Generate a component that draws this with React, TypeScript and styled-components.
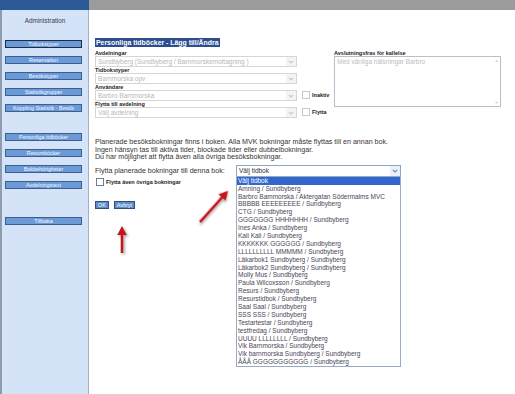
import styled, { createGlobalStyle } from "styled-components";

const GlobalStyle = createGlobalStyle`
  html, body {
    margin: 0;
    padding: 0;
    background: #fff;
    overflow: hidden;
  }
  body {
    font-family: "Liberation Sans", Arial, sans-serif;
  }
`;

const navItems = [
	{ label: "Tidbokstyper", active: true, gap: 0 },
	{ label: "Reservation", gap: 0 },
	{ label: "Besökstyper", gap: 0 },
	{ label: "Statistikgrupper", gap: 0 },
	{ label: "Koppling Statistik - Besök", gap: 0 },
	{ label: "Personliga tidböcker", gap: 13 },
	{ label: "Resursböcker", gap: 0 },
	{ label: "Bokbehörigheter", gap: 0 },
	{ label: "Avdelningstext", gap: 0 },
	{ label: "Tillbaka", gap: 20 },
];

const books = [
	"Välj tidbok",
	"Amning / Sundbyberg",
	"Barbro Bammorska / Aktergatan Södermalms MVC",
	"BBBBB EEEEEEEEE / Sundbyberg",
	"CTG / Sundbyberg",
	"GGGGGGG HHHHHHH / Sundbyberg",
	"Ines Anka / Sundbyberg",
	"Kali Kali / Sundbyberg",
	"KKKKKKK GGGGGG / Sundbyberg",
	"LLLLLLLLLL MMMMM / Sundbyberg",
	"Läkarbok1 Sundbyberg / Sundbyberg",
	"Läkarbok2 Sundbyberg / Sundbyberg",
	"Molly Mus / Sundbyberg",
	"Paula Wilcoxsson / Sundbyberg",
	"Resurs / Sundbyberg",
	"Resurstidbok / Sundbyberg",
	"Saal Saal / Sundbyberg",
	"SSS SSS / Sundbyberg",
	"Testartestar / Sundbyberg",
	"testfredag / Sundbyberg",
	"UUUU LLLLLLLL / Sundbyberg",
	"Vik Barnmorska / Sundbyberg",
	"Vik barnmorska Sundbyberg / Sundbyberg",
	"ÅÅÅ GGGGGGGGGGG / Sundbyberg",
];

const fields = [
	{ label: "Avdelningar", value: "Sundbyberg (Sundbyberg / Barnmorskemottagning )" },
	{ label: "Tidbokstyper", value: "Barnmorska opv" },
	{ label: "Användare", value: "Barbro Barnmorska" },
	{ label: "Flytta till avdelning", value: "Välj avdelning" },
];

const Chevron = ({ color }: { color: string }) => (
	<svg width="6" height="4" viewBox="0 0 6 4">
		<path d="M0.8 0.8 L3 3 L5.2 0.8" fill="none" stroke={color} strokeWidth="1.1" />
	</svg>
);

const Arrow = ({ x, y, length, angle }: { x: number; y: number; length: number; angle: number }) => (
	<g transform={`translate(${x} ${y}) rotate(${angle})`} filter="url(#shadow)">
		<rect x={-1.3} y={-length + 8} width={2.6} height={length - 8} fill="#c2151c" />
		<path d={`M0 ${-length} L-4.8 ${-length + 9} L4.8 ${-length + 9} Z`} fill="#c2151c" />
	</g>
);

export default function App() {
	return (
		<>
			<GlobalStyle />
			<Page>
				<Sidebar>
					<SidebarTop />
					<SidebarBody>
						<SidebarTitle>Administration</SidebarTitle>
						<Nav>
							{navItems.map((item) => (
								<NavButton key={item.label} $active={item.active} $gap={item.gap}>
									{item.label}
								</NavButton>
							))}
						</Nav>
					</SidebarBody>
				</Sidebar>
				<Main>
					<TopBar />
					<Content>
						<Heading>Personliga tidböcker - Lägg till/Ändra</Heading>
						<FormGrid>
							{fields.map((f, i) => (
								<Field key={f.label} style={{ gridRow: i + 1 }}>
									<Label>{f.label}</Label>
									<FakeSelect $disabled>
										<SelectText>{f.value}</SelectText>
										<SelectButton $disabled>
											<Chevron color="#c8c8c8" />
										</SelectButton>
									</FakeSelect>
								</Field>
							))}
							<CheckCell $row={3}>
								<Box $disabled />
								<CheckLabel>Inaktiv</CheckLabel>
							</CheckCell>
							<CheckCell $row={4}>
								<Box $disabled />
								<CheckLabel>Flytta</CheckLabel>
							</CheckCell>
							<NoteBlock>
								<Label>Avslutningsfras för kallelse</Label>
								<NoteBox>
									<NoteText>Med vänliga hälsningar Barbro</NoteText>
									<ScrollTrack>
										<ScrollArrow>▲</ScrollArrow>
										<ScrollArrow>▼</ScrollArrow>
									</ScrollTrack>
								</NoteBox>
							</NoteBlock>
						</FormGrid>
						<Info>
							Planerade besöksbokningar finns i boken. Alla MVK bokningar måste flyttas till en annan bok.
							<br />
							Ingen hänsyn tas till aktiva tider, blockade tider eller dubbelbokningar.
							<br />
							Du har möjlighet att flytta även alla övriga besöksbokningar.
						</Info>
						<MoveRow>
							<MoveLabel>Flytta planerade bokningar till denna bok:</MoveLabel>
							<BookSelect>
								<SelectText $dark>Välj tidbok</SelectText>
								<SelectButton>
									<Chevron color="#6f8fbf" />
								</SelectButton>
								<BookList>
									{books.map((b, i) => (
										<BookItem key={b} $selected={i === 0}>
											{b}
										</BookItem>
									))}
								</BookList>
							</BookSelect>
						</MoveRow>
						<CheckRow>
							<Box />
							<CheckLabel>Flytta även övriga bokningar</CheckLabel>
						</CheckRow>
						<Buttons>
							<ActionButton>OK</ActionButton>
							<ActionButton>Avbryt</ActionButton>
						</Buttons>
						<Annotations width="426" height="384">
							<defs>
								<filter id="shadow" x="-50%" y="-50%" width="200%" height="200%">
									<feDropShadow dx="1.5" dy="1.5" stdDeviation="1" floodColor="#000" floodOpacity="0.35" />
								</filter>
							</defs>
							<Arrow x={111} y={212} length={42} angle={42} />
							<Arrow x={33} y={243} length={27} angle={0} />
						</Annotations>
					</Content>
				</Main>
			</Page>
		</>
	);
}

const Page = styled.div`
  display: flex;
  width: 515px;
  height: 394px;
  overflow: hidden;
`;

const Sidebar = styled.aside`
  width: 89px;
  flex: none;
  display: flex;
  flex-direction: column;
`;

const SidebarTop = styled.div`
  height: 10px;
  background: #2b5995;
`;

const SidebarBody = styled.div`
  flex: 1;
  background: #d5e3f8;
  border-left: 2px solid #8f9cae;
  border-right: 1px solid #a3b0c4;
  box-sizing: border-box;
`;

const SidebarTitle = styled.div`
  margin-top: 7px;
  height: 8px;
  line-height: 8px;
  text-align: center;
  font-size: 6.4px;
  color: #3a3a4a;
`;

const Nav = styled.nav`
  display: flex;
  flex-direction: column;
  gap: 8px;
  margin-top: 15px;
  padding-left: 3px;
`;

const NavButton = styled.div<{ $active?: boolean; $gap: number }>`
  width: 77px;
  height: 8px;
  box-sizing: border-box;
  margin-top: ${(p) => p.$gap}px;
  background: #6c9ad6;
  border: 1px solid ${(p) => (p.$active ? "#1d2d48" : "#3a5f93")};
  color: #f4f8ff;
  font-size: 5.4px;
  line-height: 6px;
  text-align: center;
  white-space: nowrap;
  overflow: hidden;
`;

const Main = styled.main`
  flex: 1;
  display: flex;
  flex-direction: column;
`;

const TopBar = styled.div`
  height: 10px;
  background: #9b9b9b;
`;

const Content = styled.div`
  position: relative;
  flex: 1;
  display: flex;
  flex-direction: column;
  align-items: flex-start;
  padding: 28px 0 0 6px;
`;

const Heading = styled.div`
  height: 9px;
  line-height: 9px;
  padding: 0 1px;
  background: #2c4e8e;
  color: #fff;
  font-weight: bold;
  font-size: 6.9px;
  white-space: nowrap;
`;

const FormGrid = styled.div`
  display: grid;
  grid-template-columns: 207px 32px 167px;
  grid-template-rows: repeat(4, 17px);
  margin-top: 3px;
`;

const Field = styled.div`
  grid-column: 1;
  display: flex;
  flex-direction: column;
  width: 202px;
`;

const Label = styled.div`
  height: 6px;
  line-height: 6px;
  font-size: 5.5px;
  font-weight: bold;
  color: #222;
  white-space: nowrap;
`;

const FakeSelect = styled.div<{ $disabled?: boolean }>`
  display: flex;
  align-items: center;
  height: 11px;
  box-sizing: border-box;
  border: 1px solid ${(p) => (p.$disabled ? "#d6d6d6" : "#8ea6c6")};
  background: #fff;
`;

const SelectText = styled.span<{ $dark?: boolean }>`
  flex: 1;
  padding-left: 2px;
  font-size: 6.5px;
  line-height: 9px;
  color: ${(p) => (p.$dark ? "#333" : "#b8b8b8")};
  white-space: nowrap;
  overflow: hidden;
`;

const SelectButton = styled.span<{ $disabled?: boolean }>`
  display: flex;
  align-items: center;
  justify-content: center;
  width: 10px;
  height: 100%;
  background: ${(p) => (p.$disabled ? "#f4f4f4" : "#eaf1fb")};
`;

const CheckCell = styled.div<{ $row: number }>`
  grid-column: 2;
  grid-row: ${(p) => p.$row};
  align-self: end;
  display: flex;
  align-items: center;
  margin-bottom: 2px;
`;

const Box = styled.span<{ $disabled?: boolean }>`
  width: 8px;
  height: 8px;
  box-sizing: border-box;
  flex: none;
  border: 1px solid ${(p) => (p.$disabled ? "#c9c9c9" : "#6d7f96")};
  background: #fff;
  margin-right: 2px;
`;

const CheckLabel = styled.span`
  font-size: 5.5px;
  font-weight: bold;
  color: #222;
  white-space: nowrap;
`;

const NoteBlock = styled.div`
  grid-column: 3;
  grid-row: 1 / span 4;
  display: flex;
  flex-direction: column;
`;

const NoteBox = styled.div`
  display: flex;
  height: 51px;
  box-sizing: border-box;
  border: 1px solid #b7bfcc;
  background: #fff;
`;

const NoteText = styled.div`
  flex: 1;
  padding: 1px 2px;
  font-size: 6.5px;
  color: #bdbdbd;
`;

const ScrollTrack = styled.div`
  width: 7px;
  display: flex;
  flex-direction: column;
  justify-content: space-between;
  align-items: center;
  padding: 1px 0;
`;

const ScrollArrow = styled.span`
  font-size: 4px;
  line-height: 5px;
  color: #c9c9c9;
`;

const Info = styled.p`
  margin: 21px 0 0;
  font-size: 7.1px;
  line-height: 7.6px;
  color: #333;
  white-space: nowrap;
`;

const MoveRow = styled.div`
  display: flex;
  align-items: center;
  margin-top: 3px;
`;

const MoveLabel = styled.span`
  width: 141px;
  font-size: 7.1px;
  color: #333;
  white-space: nowrap;
`;

const BookSelect = styled(FakeSelect)`
  position: relative;
  width: 165px;
  height: 12px;
`;

const BookList = styled.ul`
  position: absolute;
  top: 100%;
  left: -1px;
  width: 165px;
  margin: 0;
  padding: 0;
  list-style: none;
  background: #fff;
  border: 1px solid #98abc4;
  box-sizing: border-box;
`;

const BookItem = styled.li<{ $selected?: boolean }>`
  height: 7.9px;
  line-height: 7.9px;
  padding-left: 1px;
  font-size: 6.5px;
  white-space: nowrap;
  background: ${(p) => (p.$selected ? "#3167cc" : "transparent")};
  color: ${(p) => (p.$selected ? "#fff" : "#4a4658")};
`;

const CheckRow = styled.div`
  display: flex;
  align-items: center;
  margin-top: 1px;
  padding-left: 1px;
`;

const Buttons = styled.div`
  display: flex;
  gap: 5px;
  margin-top: 15px;
`;

const ActionButton = styled.button`
  height: 8px;
  padding: 0 2px;
  margin: 0;
  box-sizing: border-box;
  border: 1px solid #2f4f7d;
  background: #5e8dca;
  color: #fff;
  font-family: "Liberation Sans", Arial, sans-serif;
  font-size: 5.4px;
  line-height: 6px;
`;

const Annotations = styled.svg`
  position: absolute;
  left: 0;
  top: 0;
  pointer-events: none;
  overflow: visible;
`;
